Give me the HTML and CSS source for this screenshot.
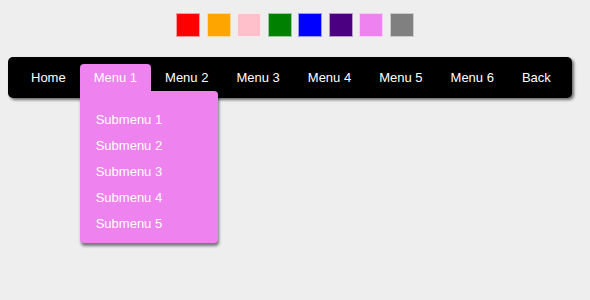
FILE: index.html
```html
<!DOCTYPE html>
<html lang="en">
<head>
  <meta charset="UTF-8">
  <meta name="viewport" content="width=device-width, initial-scale=1.0">
  <title>Menu colors</title>
  <link rel="stylesheet" href="styles.css">
</head>
<body>
  <div class="palette">
    <span class="swatch red"></span>
    <span class="swatch orange"></span>
    <span class="swatch pink"></span>
    <span class="swatch green"></span>
    <span class="swatch blue"></span>
    <span class="swatch indigo"></span>
    <span class="swatch violet"></span>
    <span class="swatch gray"></span>
  </div>

  <nav class="menu">
    <ul class="menu-list">
      <li class="menu-item"><a href="#">Home</a></li>
      <li class="menu-item open">
        <a href="#">Menu 1</a>
        <ul class="submenu">
          <li><a href="#">Submenu 1</a></li>
          <li><a href="#">Submenu 2</a></li>
          <li><a href="#">Submenu 3</a></li>
          <li><a href="#">Submenu 4</a></li>
          <li><a href="#">Submenu 5</a></li>
        </ul>
      </li>
      <li class="menu-item"><a href="#">Menu 2</a></li>
      <li class="menu-item"><a href="#">Menu 3</a></li>
      <li class="menu-item"><a href="#">Menu 4</a></li>
      <li class="menu-item"><a href="#">Menu 5</a></li>
      <li class="menu-item"><a href="#">Menu 6</a></li>
      <li class="menu-item"><a href="#">Back</a></li>
    </ul>
  </nav>
</body>
</html>
```

FILE: styles.css
```css
html,
body {
  height: 100%;
}

body {
  margin: 0;
  font-family: "Liberation Sans", Arial, sans-serif;
  font-size: 13px;
  background-color: #eeeeee;
}

.palette {
  display: flex;
  justify-content: center;
  gap: 6.6px;
  padding-top: 13px;
}

.swatch {
  display: block;
  width: 22px;
  height: 22px;
  border: 1px solid rgba(255, 255, 255, 0.6);
}

.red { background: red; }
.orange { background: orange; }
.pink { background: pink; }
.green { background: green; }
.blue { background: blue; }
.indigo { background: indigo; }
.violet { background: violet; }
.gray { background: gray; }

.menu {
  display: inline-block;
  margin: 20px 0 0 8px;
  padding: 7px 7px 7px 9px;
  background: #000;
  border-radius: 5px;
  box-shadow: 2px 2px 3px rgba(0, 0, 0, 0.55);
}

.menu-list {
  display: flex;
  margin: 0;
  padding: 0;
  list-style: none;
}

.menu-item {
  position: relative;
}

.menu-item > a {
  display: block;
  padding: 0 14px;
  line-height: 27px;
  color: #fff;
  text-decoration: none;
}

.menu-item.open > a {
  background: violet;
  border-radius: 4px 4px 0 0;
}

.submenu {
  position: absolute;
  top: 27px;
  left: 0;
  width: 138px;
  height: 130px;
  margin: 0;
  padding: 16px 0 6px;
  list-style: none;
  background: violet;
  border-radius: 0 4px 4px 4px;
  box-shadow: 1px 3px 3px rgba(0, 0, 0, 0.5);
  z-index: 2;
}

.submenu li {
  display: block;
}

.submenu a {
  display: block;
  padding: 0 16px;
  line-height: 26px;
  color: #fff;
  text-decoration: none;
  white-space: nowrap;
}
```
